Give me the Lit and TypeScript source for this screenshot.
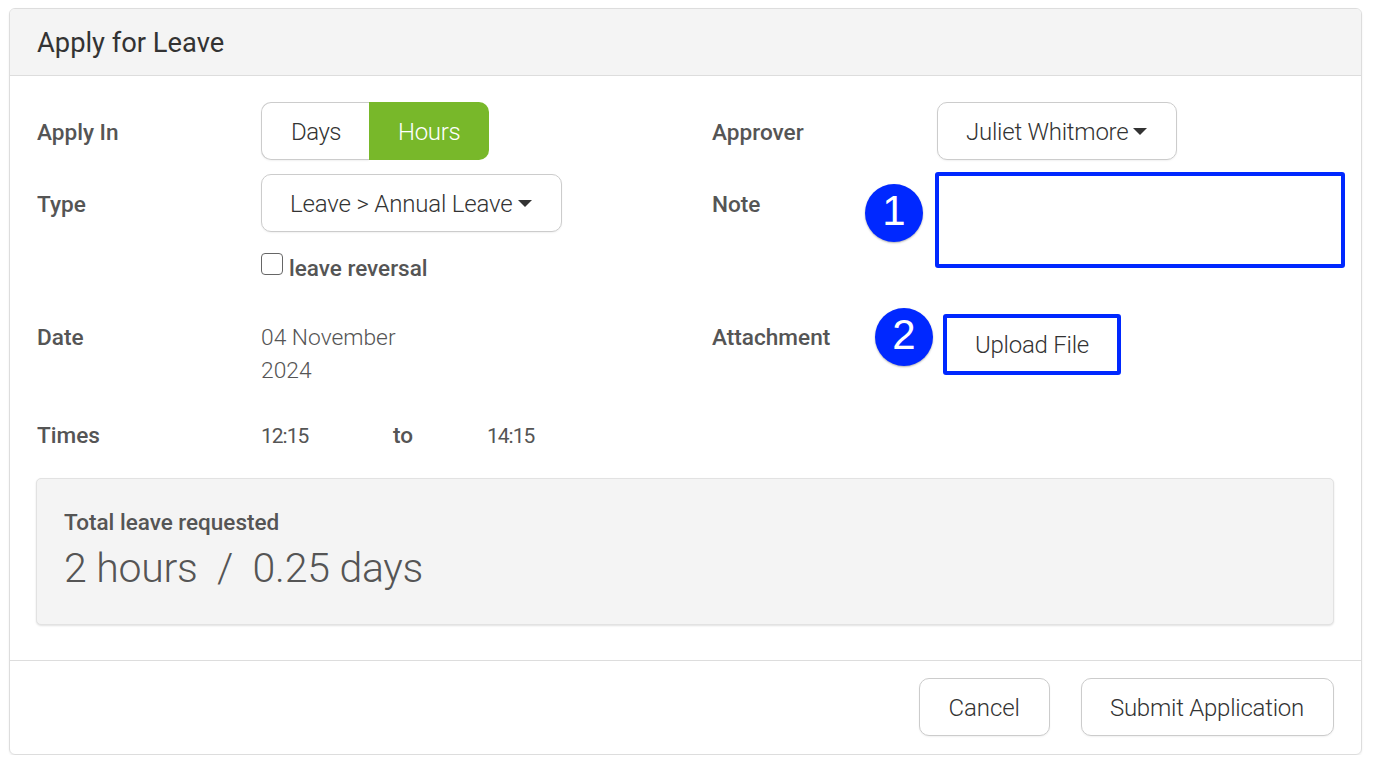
import { html, css, LitElement } from 'lit';
import { customElement } from 'lit/decorators.js';

const caret = html`<span class="caret"></span>`;

@customElement('app-root')
export class AppRoot extends LitElement {
  static styles = css`
    :host {
      display: block;
      padding: 8px 11px 0 9px;
      font-family: 'Roboto', 'Liberation Sans', sans-serif;
      font-size: 24px;
      font-weight: 300;
      color: #444;
    }
    * {
      box-sizing: border-box;
    }
    .card {
      height: 747px;
      border: 1px solid #ddd;
      border-radius: 6px;
      box-shadow: 0 1px 2px rgba(0, 0, 0, 0.08);
      display: flex;
      flex-direction: column;
    }
    .head {
      height: 67px;
      padding: 2px 27px 0;
      display: flex;
      align-items: center;
      background: #f4f4f4;
      border-bottom: 1px solid #ddd;
      border-radius: 5px 5px 0 0;
      font-size: 27.3px;
      font-weight: 400;
      color: #333;
    }
    .body {
      flex: 1;
      padding: 26px 27px 0;
    }
    .form {
      display: grid;
      grid-template-columns: 224px 451px 225px 1fr;
      grid-template-rows: 72px 133px 98px 44px;
      margin-bottom: 29px;
    }
    .label {
      font-size: 22.6px;
      font-weight: 500;
      color: #555;
      line-height: 30px;
      padding-top: 16px;
    }
    .btn {
      display: inline-flex;
      align-items: center;
      height: 58px;
      padding: 2px 29px 0 28px;
      border: 1px solid #ccc;
      border-radius: 10px;
      background: #fff;
      box-shadow: 0 1px 2px rgba(0, 0, 0, 0.06);
      color: #333;
      letter-spacing: -0.24px;
      white-space: nowrap;
    }
    .btn.wide {
      letter-spacing: -0.17px;
    }
    .btn.short {
      letter-spacing: -0.05px;
    }
    .caret {
      width: 0;
      height: 0;
      margin: -2px 0 0 5px;
      border-left: 7px solid transparent;
      border-right: 7px solid transparent;
      border-top: 7px solid #333;
    }
    .toggle {
      display: inline-flex;
      height: 58px;
    }
    .toggle .btn {
      padding: 2px 28px 0 29px;
      border-radius: 10px 0 0 10px;
      border-right: 0;
      letter-spacing: -0.5px;
    }
    .toggle .btn.on {
      padding: 2px 29px 0;
      background: #78b82a;
      border: 0;
      border-radius: 0 10px 10px 0;
      color: #fff;
      box-shadow: none;
      letter-spacing: -0.3px;
    }
    .check {
      display: flex;
      align-items: flex-end;
      gap: 6px;
      margin-top: 21px;
      font-size: 22.5px;
      font-weight: 500;
      color: #555;
      line-height: 24px;
    }
    .box {
      width: 22px;
      height: 22px;
      border: 1px solid #666;
      border-radius: 4px;
      margin-bottom: 5px;
    }
    .plain {
      font-size: 22.8px;
      line-height: 33px;
      padding-top: 14px;
      color: #555;
    }
    .times {
      display: flex;
      font-size: 21px;
      font-weight: 400;
      line-height: 30px;
      padding-top: 16px;
      letter-spacing: -1px;
      color: #555;
    }
    .times span:nth-child(1) {
      width: 132px;
    }
    .times span:nth-child(2) {
      width: 94px;
      margin-top: -1px;
      font-size: 22.5px;
      font-weight: 500;
      letter-spacing: 0;
    }
    .anno {
      position: relative;
    }
    .note {
      width: 410px;
      height: 96px;
      margin: -2px 0 0 -2px;
      border: 4px solid #0028ff;
      border-radius: 3px;
      background: #fff;
    }
    .upload {
      height: 61px;
      width: 178px;
      margin: 7px 0 0 6px;
      border: 4px solid #0028ff;
      border-radius: 3px;
      padding: 0 0 0 28px;
      box-shadow: none;
    }
    .bubble {
      position: absolute;
      width: 58px;
      height: 58px;
      padding-bottom: 4px;
      border-radius: 50%;
      background: #0028ff;
      color: #fff;
      font-family: 'Liberation Sans', sans-serif;
      font-size: 42px;
      font-weight: 400;
      display: flex;
      align-items: center;
      justify-content: center;
      box-shadow: 0 1px 2px rgba(0, 0, 0, 0.3);
    }
    .bubble.one {
      left: -72px;
      top: 10px;
    }
    .bubble.two {
      left: -62px;
      top: 1px;
    }
    .summary {
      margin: 0 0 0 -1px;
      height: 147px;
      width: 1298px;
      padding: 29px 27px;
      background: #f4f4f4;
      border: 1px solid #e2e2e2;
      border-radius: 5px;
      box-shadow: 0 1px 2px rgba(0, 0, 0, 0.12);
    }
    .summary .title {
      font-size: 22.5px;
      font-weight: 500;
      line-height: 28px;
      color: #555;
    }
    .summary .total {
      font-size: 41px;
      line-height: 50px;
      letter-spacing: -0.25px;
      color: #555;
      white-space: pre;
      margin-top: 7px;
    }
    .foot {
      height: 94px;
      padding: 17px 27px 0 0;
      border-top: 1px solid #ddd;
      display: flex;
      justify-content: flex-end;
      gap: 31px;
    }
  `;

  render() {
    return html`
      <div class="card">
        <div class="head">Apply for Leave</div>
        <div class="body">
          <div class="form">
            <div class="label">Apply In</div>
            <div>
              <div class="toggle">
                <div class="btn">Days</div>
                <div class="btn on">Hours</div>
              </div>
            </div>
            <div class="label">Approver</div>
            <div><div class="btn">Juliet Whitmore${caret}</div></div>

            <div class="label">Type</div>
            <div>
              <div class="btn wide">Leave &gt; Annual Leave${caret}</div>
              <div class="check"><span class="box"></span>leave reversal</div>
            </div>
            <div class="label">Note</div>
            <div class="anno">
              <div class="note"></div>
              <div class="bubble one">1</div>
            </div>

            <div class="label">Date</div>
            <div class="plain">04 November<br />2024</div>
            <div class="label">Attachment</div>
            <div class="anno">
              <div class="btn upload">Upload File</div>
              <div class="bubble two">2</div>
            </div>

            <div class="label">Times</div>
            <div class="times"><span>12:15</span><span>to</span><span>14:15</span></div>
            <div></div>
            <div></div>
          </div>
          <div class="summary">
            <div class="title">Total leave requested</div>
            <div class="total">2 hours  /  0.25 days</div>
          </div>
        </div>
        <div class="foot">
          <div class="btn short">Cancel</div>
          <div class="btn">Submit Application</div>
        </div>
      </div>
    `;
  }
}
